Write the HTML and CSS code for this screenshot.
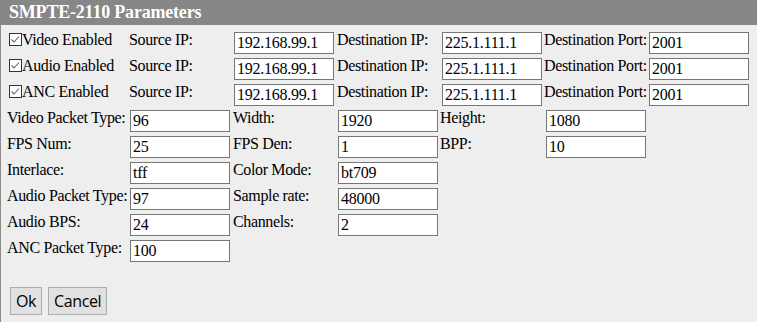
FILE: index.html
```html
<!DOCTYPE html>
<html>
<head>
<meta charset="utf-8">
<title>SMPTE-2110 Parameters</title>
<link rel="stylesheet" href="styles.css">
</head>
<body>
<div class="dialog">
  <div class="title">SMPTE-2110 Parameters</div>
  <div class="body">
    <div class="grid streams">
      <div class="check"><svg class="cb" width="13" height="13" viewBox="0 0 13 13"><rect x="0.5" y="0.5" width="12" height="12" fill="#fff" stroke="#333"/><polyline points="2.5,6.5 5,9 10,3.5" fill="none" stroke="#666" stroke-width="1.1"/></svg><span class="lbl">Video Enabled</span></div>
      <div class="lbl">Source IP:</div><input class="field" type="text" value="192.168.99.1">
      <div class="lbl">Destination IP:</div><input class="field" type="text" value="225.1.111.1">
      <div class="lbl">Destination Port:</div><input class="field" type="text" value="2001">

      <div class="check"><svg class="cb" width="13" height="13" viewBox="0 0 13 13"><rect x="0.5" y="0.5" width="12" height="12" fill="#fff" stroke="#333"/><polyline points="2.5,6.5 5,9 10,3.5" fill="none" stroke="#666" stroke-width="1.1"/></svg><span class="lbl">Audio Enabled</span></div>
      <div class="lbl">Source IP:</div><input class="field" type="text" value="192.168.99.1">
      <div class="lbl">Destination IP:</div><input class="field" type="text" value="225.1.111.1">
      <div class="lbl">Destination Port:</div><input class="field" type="text" value="2001">

      <div class="check"><svg class="cb" width="13" height="13" viewBox="0 0 13 13"><rect x="0.5" y="0.5" width="12" height="12" fill="#fff" stroke="#333"/><polyline points="2.5,6.5 5,9 10,3.5" fill="none" stroke="#666" stroke-width="1.1"/></svg><span class="lbl">ANC Enabled</span></div>
      <div class="lbl">Source IP:</div><input class="field" type="text" value="192.168.99.1">
      <div class="lbl">Destination IP:</div><input class="field" type="text" value="225.1.111.1">
      <div class="lbl">Destination Port:</div><input class="field" type="text" value="2001">
    </div>

    <div class="grid params">
      <div class="lbl">Video Packet Type:</div><input class="field" type="text" value="96">
      <div class="lbl">Width:</div><input class="field" type="text" value="1920">
      <div class="lbl">Height:</div><input class="field" type="text" value="1080">

      <div class="lbl">FPS Num:</div><input class="field" type="text" value="25">
      <div class="lbl">FPS Den:</div><input class="field" type="text" value="1">
      <div class="lbl">BPP:</div><input class="field" type="text" value="10">

      <div class="lbl">Interlace:</div><input class="field" type="text" value="tff">
      <div class="lbl">Color Mode:</div><input class="field" type="text" value="bt709">
      <div></div><div></div>

      <div class="lbl">Audio Packet Type:</div><input class="field" type="text" value="97">
      <div class="lbl">Sample rate:</div><input class="field" type="text" value="48000">
      <div></div><div></div>

      <div class="lbl">Audio BPS:</div><input class="field" type="text" value="24">
      <div class="lbl">Channels:</div><input class="field" type="text" value="2">
      <div></div><div></div>

      <div class="lbl">ANC Packet Type:</div><input class="field" type="text" value="100">
      <div></div><div></div><div></div><div></div>
    </div>

    <div class="actions">
      <button class="btn" type="button">Ok</button>
      <button class="btn" type="button">Cancel</button>
    </div>
  </div>
</div>
</body>
</html>
```

FILE: styles.css
```css
html, body {
  margin: 0;
  padding: 0;
  background: #eeeeee;
}

.dialog {
  width: 757px;
  height: 322px;
  background: #eeeeee;
  overflow: hidden;
}

.title {
  height: 25px;
  line-height: 25px;
  background: #878787;
  color: #ffffff;
  font-family: "Liberation Serif", "Times New Roman", serif;
  font-weight: bold;
  font-size: 18px;
  letter-spacing: -0.2px;
  padding-left: 9px;
}

.body {
  border-left: 1px solid #8c8c8c;
  height: 297px;
  padding-top: 5px;
  box-sizing: border-box;
}

.grid {
  display: grid;
  grid-auto-rows: 26px;
  align-items: start;
}

.streams {
  padding-left: 4px;
  grid-template-columns: 124px 105px 103px 105px 102px 105px 100px;
}

.params {
  padding-left: 6px;
  grid-template-columns: 123px 103px 105px 102px 106px 100px;
}

.lbl {
  font-family: "Liberation Serif", "Times New Roman", serif;
  font-size: 16px;
  line-height: 20px;
  letter-spacing: -0.35px;
  color: #000;
  white-space: nowrap;
}

.check {
  display: flex;
  align-items: flex-start;
}

.cb {
  display: block;
  flex: none;
  margin: 3px 0 0 4px;
}

.field {
  display: block;
  margin: 2px 0 0 0;
  width: 100px;
  height: 22px;
  box-sizing: border-box;
  border: 1px solid #767676;
  border-radius: 0;
  padding: 0 2px;
  background: #ffffff;
  color: #000;
  font-family: "Liberation Serif", "Times New Roman", serif;
  font-size: 16px;
  letter-spacing: -0.25px;
  outline: none;
}

.actions {
  display: flex;
  gap: 6px;
  padding-left: 9px;
  margin-top: 23px;
}

.btn {
  height: 28px;
  padding: 0 5px;
  border: 1px solid #adadad;
  border-radius: 0;
  background: #e1e1e1;
  color: #000;
  font-family: "Open Sans", "Noto Sans", sans-serif;
  font-size: 16px;
  letter-spacing: -0.4px;
  line-height: 26px;
}
```
